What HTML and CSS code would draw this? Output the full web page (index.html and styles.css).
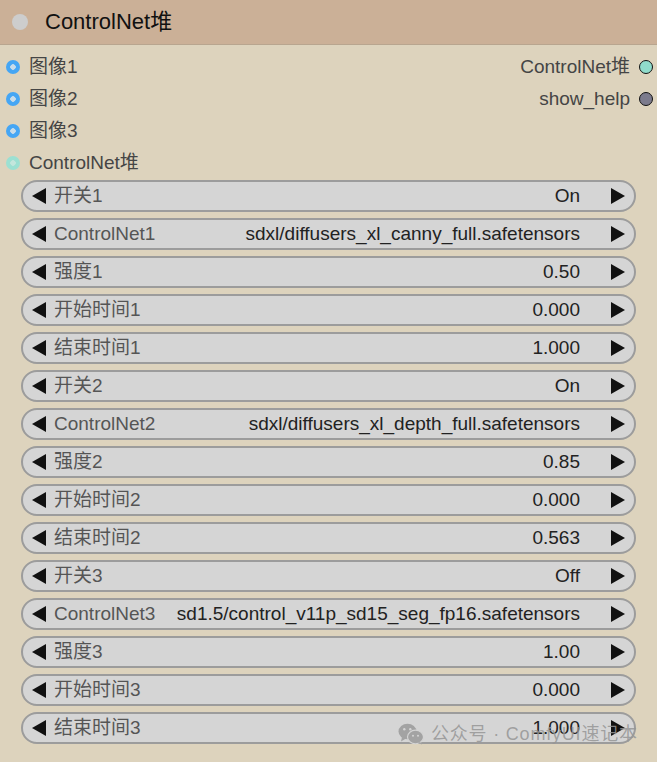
FILE: index.html
```html
<!DOCTYPE html>
<html lang="zh">
<head>
    <meta charset="UTF-8">
    <title>ControlNet堆</title>
    <link rel="stylesheet" href="styles.css">
</head>
<body>
    <div class="node">
        <!-- Title -->
        <div class="node-title">
            <span class="title-dot"></span>
            <span class="title-text">ControlNet堆</span>
        </div>

        <!-- Slots -->
        <div class="slots">
            <div class="slot-col">
                <div class="slot"><span class="dot dot-image"></span><span class="slot-label">图像1</span></div>
                <div class="slot"><span class="dot dot-image"></span><span class="slot-label">图像2</span></div>
                <div class="slot"><span class="dot dot-image"></span><span class="slot-label">图像3</span></div>
                <div class="slot"><span class="dot dot-stack"></span><span class="slot-label">ControlNet堆</span></div>
            </div>
            <div class="slot-col slot-col-out">
                <div class="slot slot-out"><span class="slot-label">ControlNet堆</span><span class="dot out-stack"></span></div>
                <div class="slot slot-out"><span class="slot-label">show_help</span><span class="dot out-help"></span></div>
            </div>
        </div>

        <!-- Widgets -->
        <div class="widgets">
            <div class="widget"><span class="arrow-l"></span><span class="w-label">开关1</span><span class="w-value">On</span><span class="arrow-r"></span></div>
            <div class="widget"><span class="arrow-l"></span><span class="w-label">ControlNet1</span><span class="w-value">sdxl/diffusers_xl_canny_full.safetensors</span><span class="arrow-r"></span></div>
            <div class="widget"><span class="arrow-l"></span><span class="w-label">强度1</span><span class="w-value">0.50</span><span class="arrow-r"></span></div>
            <div class="widget"><span class="arrow-l"></span><span class="w-label">开始时间1</span><span class="w-value">0.000</span><span class="arrow-r"></span></div>
            <div class="widget"><span class="arrow-l"></span><span class="w-label">结束时间1</span><span class="w-value">1.000</span><span class="arrow-r"></span></div>
            <div class="widget"><span class="arrow-l"></span><span class="w-label">开关2</span><span class="w-value">On</span><span class="arrow-r"></span></div>
            <div class="widget"><span class="arrow-l"></span><span class="w-label">ControlNet2</span><span class="w-value">sdxl/diffusers_xl_depth_full.safetensors</span><span class="arrow-r"></span></div>
            <div class="widget"><span class="arrow-l"></span><span class="w-label">强度2</span><span class="w-value">0.85</span><span class="arrow-r"></span></div>
            <div class="widget"><span class="arrow-l"></span><span class="w-label">开始时间2</span><span class="w-value">0.000</span><span class="arrow-r"></span></div>
            <div class="widget"><span class="arrow-l"></span><span class="w-label">结束时间2</span><span class="w-value">0.563</span><span class="arrow-r"></span></div>
            <div class="widget"><span class="arrow-l"></span><span class="w-label">开关3</span><span class="w-value">Off</span><span class="arrow-r"></span></div>
            <div class="widget"><span class="arrow-l"></span><span class="w-label">ControlNet3</span><span class="w-value">sd1.5/control_v11p_sd15_seg_fp16.safetensors</span><span class="arrow-r"></span></div>
            <div class="widget"><span class="arrow-l"></span><span class="w-label">强度3</span><span class="w-value">1.00</span><span class="arrow-r"></span></div>
            <div class="widget"><span class="arrow-l"></span><span class="w-label">开始时间3</span><span class="w-value">0.000</span><span class="arrow-r"></span></div>
            <div class="widget"><span class="arrow-l"></span><span class="w-label">结束时间3</span><span class="w-value">1.000</span><span class="arrow-r"></span></div>
        </div>

        <!-- Watermark -->
        <div class="watermark">
            <svg class="wm-icon" width="26" height="22" viewBox="0 0 26 22">
                <ellipse cx="9.5" cy="8.5" rx="9" ry="7.8" fill="#a3a3a3"/>
                <path d="M4 14 L3 18.5 L8 15.5 Z" fill="#a3a3a3"/>
                <ellipse cx="17.5" cy="14" rx="8" ry="6.8" fill="#a3a3a3" stroke="#d4d4d4" stroke-width="1.2"/>
                <path d="M22 19 L24 21.5 L19.5 20 Z" fill="#a3a3a3"/>
                <circle cx="6.3" cy="6.3" r="1.2" fill="#d4d4d4"/>
                <circle cx="12.3" cy="6.3" r="1.2" fill="#d4d4d4"/>
                <circle cx="15" cy="12.8" r="1" fill="#d4d4d4"/>
                <circle cx="20" cy="12.8" r="1" fill="#d4d4d4"/>
            </svg>
            <span>公众号 · ComfyUI速记本</span>
        </div>
    </div>
</body>
</html>
```

FILE: styles.css
```css
body {
    margin: 0;
    background-color: #ddd3bd;
    font-family: 'Liberation Sans', 'Noto Sans CJK SC', sans-serif;
}

.node {
    position: relative;
    width: 657px;
    height: 762px;
    background-color: #ddd3bd;
    overflow: hidden;
}

.node-title {
    height: 45px;
    background-color: #cbb097;
    border-bottom: 1px solid #b8a58f;
    display: flex;
    align-items: center;
    box-sizing: border-box;
    padding-left: 12px;
}

.title-dot {
    width: 16px;
    height: 16px;
    border-radius: 50%;
    background-color: #cdcdcd;
    margin-right: 17px;
}

.title-text {
    font-size: 22px;
    line-height: 24px;
    color: #111;
}

.slots {
    display: flex;
    justify-content: space-between;
    padding-top: 6px;
}

.slot-col {
    display: flex;
    flex-direction: column;
}

.slot-col-out {
    align-items: flex-end;
}

.slot {
    height: 32px;
    display: flex;
    align-items: center;
    font-size: 19px;
    color: #454545;
}

.slot-label {
    line-height: 20px;
}

.dot {
    width: 14px;
    height: 14px;
    border-radius: 50%;
    box-sizing: border-box;
    margin: 0 9px 0 6px;
}

.dot-image {
    background: radial-gradient(circle, #c8dcea 0, #c8dcea 2.5px, #45a6f4 3px);
}

.dot-stack {
    background: radial-gradient(circle, #c3e6dc 0, #c3e6dc 2.5px, #9ce0d2 3px);
}

.slot-out .dot {
    width: 14px;
    height: 14px;
    border: 1.5px solid #111;
    margin: 0 4px 0 9px;
}

.out-stack {
    background-color: #90dccb;
}

.out-help {
    background-color: #7c7b8d;
}

.widgets {
    display: flex;
    flex-direction: column;
    gap: 6px;
    padding: 1px 21px 0 21px;
}

.widget {
    height: 32px;
    box-sizing: border-box;
    border: 2px solid #9c9c9c;
    border-radius: 16px;
    background-color: #d5d5d5;
    display: flex;
    align-items: center;
    padding: 0 9px 0 9px;
    font-size: 19px;
    line-height: 20px;
}

.arrow-l,
.arrow-r {
    width: 0;
    height: 0;
    border-top: 8px solid transparent;
    border-bottom: 8px solid transparent;
}

.arrow-l {
    border-right: 14px solid #111;
}

.arrow-r {
    border-left: 14px solid #111;
}

.w-label {
    color: #555;
    margin-left: 8px;
    flex: 1;
    white-space: nowrap;
}

.w-value {
    color: #222;
    margin-right: 31px;
    white-space: nowrap;
}

.watermark {
    position: absolute;
    left: 398px;
    top: 722px;
    display: flex;
    align-items: center;
    gap: 7px;
    font-size: 18px;
    line-height: 24px;
    color: rgba(150, 150, 150, 0.85);
    letter-spacing: 0.8px;
}

.wm-icon {
    flex-shrink: 0;
}
```
